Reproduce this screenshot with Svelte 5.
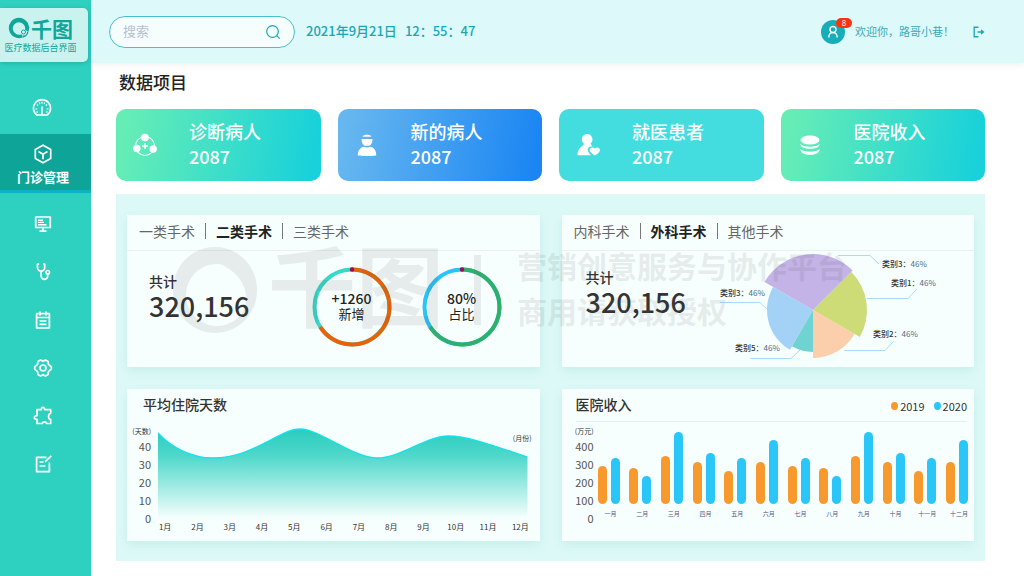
<script>
  const months = Array.from({ length: 12 }, (_, i) => `${i + 1}月`);
  const dayTicks = [40, 30, 20, 10, 0];
  const incomeTicks = [400, 300, 200, 100, 0];

  const stats = [
    { title: '诊断病人', value: '2087', tone: 'mint', icon: 'network' },
    { title: '新的病人', value: '2087', tone: 'blue', icon: 'patient' },
    { title: '就医患者', value: '2087', tone: 'aqua', icon: 'care' },
    { title: '医院收入', value: '2087', tone: 'mint', icon: 'coins' }
  ];

  const income = [
    ['一月', 38, 46], ['二月', 36, 28], ['三月', 48, 72], ['四月', 42, 51],
    ['五月', 33, 46], ['六月', 42, 64], ['七月', 38, 46], ['八月', 36, 28],
    ['九月', 48, 72], ['十月', 42, 51], ['十一月', 33, 46], ['十二月', 42, 64]
  ];

  const rings = [
    { value: '+1260', label: '新增', main: '#ea6208', rest: '#36d8c8' },
    { value: '80%', label: '占比', main: '#2fb06a', rest: '#2bc4f8' }
  ];

  // Angles run clockwise from twelve o'clock.
  const slices = [
    { from: 210, to: 300, r: 46, color: '#a4d1f6' },
    { from: 180, to: 210, r: 42, color: '#6fd3d2' },
    { from: 120, to: 180, r: 48, color: '#fbcfab' },
    { from: 45, to: 120, r: 54, color: '#cddc76' },
    { from: 300, to: 405, r: 56, color: '#c3b3e6' }
  ];

  const callouts = [
    { name: '类别3', x: 5, y: 45, line: '5,51.5 45,51.5 53,59' },
    { name: '类别5', x: 20, y: 100, line: '35,107.5 76,107.5 85,99' },
    { name: '类别3', x: 167, y: 16, line: '123,4.5 155,4.5 164,13' },
    { name: '类别1', x: 176, y: 35, line: '152,47.5 193,47.5 202,38' },
    { name: '类别2', x: 158, y: 86, line: '129,99.5 170,99.5 179,90' }
  ];

  function point(cx, cy, r, angle) {
    const a = (angle * Math.PI) / 180;
    return `${(cx + r * Math.sin(a)).toFixed(2)} ${(cy - r * Math.cos(a)).toFixed(2)}`;
  }

  function wedge({ from, to, r }) {
    return `M98 59 L${point(98, 59, r, from)} A${r} ${r} 0 0 1 ${point(98, 59, r, to)} Z`;
  }

  const curve =
    'M0 7 C14 22 34 32 55 32 C95 32 122 3 142 3 C162 3 196 32 219 32 C243 32 268 10 291 10 C312 10 345 23 370 31';

  let surgery = $state(1);
  let department = $state(1);
  let query = $state('');
</script>

{#snippet tabs(names, active, pick)}
  <div class="tabs">
    {#each names as name, i}
      {#if i > 0}<span class="divider"></span>{/if}
      <button type="button" class:active={i === active} onclick={() => pick(i)}>{name}</button>
    {/each}
  </div>
{/snippet}

<div class="app">
  <aside>
    <div class="brand">
      <div class="brand-name">
        <svg viewBox="0 0 22 22" width="22" height="22" aria-hidden="true">
          <path fill="#10a69a" fill-rule="evenodd" d="M11 .8a10.200 10.200 0 1 0 3.500 19.800l-1-3.400A6.200 6.200 0 1 1 17 13l3.500 1.500A10.200 10.200 0 0 0 11 .8z" />
          <circle cx="15.500" cy="15" r="2" fill="none" stroke="#10a69a" stroke-width="1" />
          <path d="M14.500 18.200c2.500 1 4.800-.8 4.500-3.700l1.500 0c-.5 3.500-3 5.900-6 6.100z" fill="#10a69a" />
        </svg>
        <span>千图</span>
      </div>
      <div class="brand-sub">医疗数据后台界面</div>
    </div>

    <nav>
      <a href="#overview" class="first" aria-label="概览">
        <svg viewBox="0 0 20 20" width="20" height="20">
          <path d="M4.800 17h10.400A8.600 8.600 0 1 0 4.800 17z" />
          <path d="M10 8.500v8" stroke-width="1.600" />
          <path d="M3.500 11h1.800M14.700 11h1.800M5 6.500l1.200 1M15 6.500l-1.200 1M10 3.800v1.700M4.200 14H6M14 14h1.800M7.300 4.600l.6 1.300M12.700 4.600l-.6 1.300" stroke-width="1.200" />
        </svg>
      </a>
      <a href="#clinic" class="current">
        <svg viewBox="0 0 20 20" width="20" height="20">
          <path d="M10 1.200l7.700 4.400v8.800L10 18.800l-7.700-4.400V5.600z" />
          <path d="M5.500 7.500L10 10.200l4.500-2.700M10 10.200v5" />
        </svg>
        <span>门诊管理</span>
      </a>
      <a href="#monitor" aria-label="监控">
        <svg viewBox="0 0 20 20" width="20" height="20">
          <path d="M2.700 3h14.600v10.500H2.700zM10 13.500V17M6.500 17.200h7" />
          <path d="M5 6.200h5M5 8.400h6M5 10.700h8.500" stroke-width="1.400" />
        </svg>
      </a>
      <a href="#diagnosis" aria-label="诊断">
        <svg viewBox="0 0 20 20" width="20" height="20">
          <path d="M6.200 2H4.500v3.500a3.600 3.600 0 0 0 7.200 0V2H10M8.100 9.300v4.700a3.300 3.300 0 0 0 6.600 0V12" />
          <circle cx="14.800" cy="10.200" r="1.700" />
        </svg>
      </a>
      <a href="#schedule" aria-label="排班">
        <svg viewBox="0 0 20 20" width="20" height="20">
          <path d="M3.600 3.600h12.800v14.200H3.600zM3.600 7.500h12.800M7 1.500v4M13 1.500v4M6.500 11h7M6.500 14.300h7" />
        </svg>
      </a>
      <a href="#settings" aria-label="设置">
        <svg viewBox="0 0 20 20" width="20" height="20">
          <path d="M7.600 2l2.400 1.300L12.400 2l2.700 1.500.3 2.900 2.900 2.500v2.200l-2.900 2.500-.3 2.900-2.700 1.500-2.400-1.300L7.600 18l-2.700-1.500-.3-2.900-2.900-2.500V8.900l2.900-2.500.3-2.900z" />
          <circle cx="10" cy="10" r="3" />
        </svg>
      </a>
      <a href="#plugins" aria-label="扩展">
        <svg viewBox="0 0 20 20" width="20" height="20">
          <path d="M4 3.700h4.300c-.3-3 3.700-3 3.400 0h6v3.600c-2.900.6-2.900 5.700 0 6.300v3.900h-4.200c-.6-2.300-3.600-2.300-4.200 0H4v-4.200c-3.500.6-3.500-4.100 0-3.600z" />
        </svg>
      </a>
      <a href="#records" aria-label="记录">
        <svg viewBox="0 0 20 20" width="20" height="20">
          <path d="M13.500 3.300H3.600v14.400h12.800V8.500M18.300 1.800L12 7.800M6.500 8h4M6.500 12h6" />
        </svg>
      </a>
    </nav>
  </aside>

  <div class="page">
    <header>
      <label class="search">
        <input type="text" placeholder="搜索" aria-label="搜索" bind:value={query} />
        <svg viewBox="0 0 16 16" width="16" height="16" aria-hidden="true">
          <circle cx="7.500" cy="7.500" r="5.800" />
          <path d="M11.700 11.700l3 3" />
        </svg>
      </label>
      <div class="clock"><span>2021年9月21日</span><span>12：55：47</span></div>
      <div class="user">
        <span class="avatar">
          <svg viewBox="0 0 24 24" width="24" height="24" aria-hidden="true">
            <circle cx="12" cy="9.500" r="3" />
            <path d="M7.800 17.500c0-6.500 8.400-6.500 8.400 0" />
          </svg>
          <span class="badge">8</span>
        </span>
        <span class="hello">欢迎你，路哥小巷！</span>
        <button type="button" class="logout" aria-label="退出">
          <svg viewBox="0 0 12 12" width="12" height="12">
            <path d="M5.500 1.200H1.200v9.600h4.300M4.500 6H9" />
            <path d="M8 3.300L11.600 6 8 8.700z" fill="#1fa9b5" stroke="none" />
          </svg>
        </button>
      </div>
    </header>

    <main>
      <h1>数据项目</h1>

      <section class="stats">
        {#each stats as s}
          <article class="stat {s.tone}">
            <svg viewBox="0 0 26 26" width="26" height="26" aria-hidden="true">
              {#if s.icon === 'network'}
                <circle cx="13" cy="14" r="9.500" fill="none" stroke="#fff" stroke-width="1.100" />
                <circle cx="13" cy="5.500" r="3.800" />
                <circle cx="4.800" cy="16.500" r="3.700" />
                <circle cx="21.200" cy="17" r="3.700" />
                <path d="M12.300 11h1.500v2.300H16v1.500h-2.200V17h-1.500v-2.200H10v-1.500h2.300z" />
              {:else if s.icon === 'patient'}
                <path d="M8.500 4.500C9.500 2 16.500 2 17.500 4.500l-2 .3h-5zM7.500 7h11c0 3.500-1.500 6-3.300 6.800h-4.400C9 13 7.500 10.500 7.500 7zM3.800 23.500C3.500 18 7 15 10 14.700c2 .9 4 .9 6 0 3.500.3 6.500 3.300 6.200 8.800-2 .6-16.400.6-18.400 0z" />
              {:else if s.icon === 'care'}
                <path d="M12 2a5.300 5.300 0 0 1 3.600 9.300l1 2.300 1 1c-3-.8-5.500 1-4.600 4.300.4 1.500 1.500 2.800 3 4.300H2.500C2.500 18 5 15 8.600 13.200v-2A5.300 5.300 0 0 1 12 2z" />
                <path d="M19.800 16.500c1.700-2 5.200-1.200 5.200 1.400 0 2.300-2.600 3.600-5.200 5.600-2.600-2-5.200-3.300-5.200-5.600 0-2.600 3.500-3.400 5.200-1.400z" />
              {:else}
                <ellipse cx="13" cy="8" rx="9.500" ry="4.500" />
                <path d="M3.500 12c3 3.700 16 3.700 19 0 1.300 6.300-20.300 6.300-19 0zM3.500 17c3 3.700 16 3.700 19 0 1.300 7.800-20.300 7.800-19 0z" />
              {/if}
            </svg>
            <div>
              <h2>{s.title}</h2>
              <strong>{s.value}</strong>
            </div>
          </article>
        {/each}
      </section>

      <section class="board">
        <article class="card">
          {@render tabs(['一类手术', '二类手术', '三类手术'], surgery, (i) => (surgery = i))}
          <div class="summary">
            <div class="total"><span>共计</span><strong>320,156</strong></div>
            <div class="rings">
              {#each rings as ring}
                <div class="ring">
                  <svg viewBox="0 0 80 80" width="80" height="80" aria-hidden="true">
                    <circle cx="40" cy="40" r="37.500" stroke={ring.rest} />
                    <path d="M{point(40, 40, 37.5, 0)} A37.500 37.500 0 1 1 {point(40, 40, 37.5, 238)}" stroke={ring.main} />
                    <circle class="dot" cx="40" cy="2.500" r="2.200" />
                  </svg>
                  <div><b>{ring.value}</b><span>{ring.label}</span></div>
                </div>
              {/each}
            </div>
          </div>
        </article>

        <article class="card">
          {@render tabs(['内科手术', '外科手术', '其他手术'], department, (i) => (department = i))}
          <div class="summary split">
            <div class="total"><span>共计</span><strong>320,156</strong></div>
            <svg class="pie" viewBox="0 0 230 114" width="230" height="114" role="img" aria-label="手术类别">
              {#each callouts as c}
                <polyline points={c.line} />
                <text x={c.x} y={c.y}>{c.name}：<tspan>46%</tspan></text>
              {/each}
              {#each slices as s}
                <path d={wedge(s)} fill={s.color} />
              {/each}
            </svg>
          </div>
        </article>

        <article class="card">
          <h3>平均住院天数</h3>
          <div class="chart days">
            <div class="axis">
              <span class="unit">(天数)</span>
              {#each dayTicks as t}<span>{t}</span>{/each}
            </div>
            <div class="plot">
              <svg viewBox="0 0 370 93" preserveAspectRatio="none" aria-hidden="true">
                <defs>
                  <linearGradient id="fade" x1="0" y1="0" x2="0" y2="1">
                    <stop offset="0" stop-color="#2accbd" />
                    <stop offset="0.300" stop-color="#4fd8cb" />
                    <stop offset="1" stop-color="#f7fffe" />
                  </linearGradient>
                </defs>
                <path d="{curve} V93 H0 Z" fill="url(#fade)" />
                <path d={curve} fill="none" stroke="#12e3ec" stroke-width="1.300" />
              </svg>
              <span class="unit month-unit">(月份)</span>
              <div class="months">
                {#each months as m}<span>{m}</span>{/each}
              </div>
            </div>
          </div>
        </article>

        <article class="card">
          <div class="income-head">
            <h3>医院收入</h3>
            <div class="legend">
              <span><i class="y2019"></i>2019</span>
              <span><i class="y2020"></i>2020</span>
            </div>
          </div>
          <div class="chart income">
            <div class="axis">
              <span class="unit">(万元)</span>
              {#each incomeTicks as t}<span>{t}</span>{/each}
            </div>
            <div class="groups">
              {#each income as [name, a, b]}
                <div class="group">
                  <div class="bars">
                    <i class="y2019" style="height: {a}px"></i>
                    <i class="y2020" style="height: {b}px"></i>
                  </div>
                  <span>{name}</span>
                </div>
              {/each}
            </div>
          </div>
        </article>

        <div class="watermark" aria-hidden="true">
          <svg viewBox="0 0 86 88" width="86" height="88">
            <path fill-rule="evenodd" d="M43 1a42 43 0 1 0 .1 0zM45 18a31 31 0 1 1-.1 0z" />
            <path d="M48 18c34 4 44 42 14 62 18-18 18-48-14-62z" />
          </svg>
          <span class="mark">千图</span>
          <span class="bar"></span>
          <div class="lines"><span>营销创意服务与协作平台</span><span>商用请获取授权</span></div>
        </div>
      </section>
    </main>
  </div>
</div>

<style>
  :global(body) {
    background: #fff;
  }

  .app {
    display: flex;
    min-height: 100vh;
    font-family: 'Noto Sans CJK SC', 'Noto Sans', sans-serif;
    color: #333;
  }

  .app :global(*) {
    box-sizing: border-box;
  }

  h1, h2, h3 {
    margin: 0;
    font-weight: 500;
  }

  button {
    padding: 0;
    border: 0;
    background: none;
    font: inherit;
    color: inherit;
    cursor: pointer;
  }

  aside {
    flex: 0 0 91px;
    background: #2ed1c0;
  }

  .brand {
    display: flex;
    flex-direction: column;
    align-items: center;
    width: 88px;
    height: 54px;
    margin-top: 8px;
    padding: 7px 7px 0 0;
    border-radius: 0 5px 5px 0;
    background: #caf3f0;
    box-shadow: 0 1px 4px rgba(0, 90, 90, 0.3);
    color: #10a69a;
  }

  .brand-name {
    display: flex;
    align-items: center;
    gap: 1px;
    font-size: 21px;
    font-weight: 700;
    line-height: 26px;
  }

  .brand-sub {
    font-size: 9px;
    line-height: 14px;
    white-space: nowrap;
  }

  nav {
    display: flex;
    flex-direction: column;
    padding-top: 22px;
  }

  nav a {
    display: flex;
    flex-direction: column;
    align-items: center;
    justify-content: center;
    height: 48px;
    padding: 0 5px 1px 0;
    color: #fff;
    font-size: 13px;
    font-weight: 700;
    line-height: 20px;
    text-decoration: none;
  }

  nav a.first {
    margin-bottom: 2px;
    padding-right: 8px;
  }

  nav a.current {
    gap: 3px;
    height: 59px;
    margin-bottom: 7px;
    padding-top: 8px;
    border-bottom: 3px solid #08b4c6;
    background: #0ea498;
  }

  nav svg {
    fill: none;
    stroke: #fff;
    stroke-width: 1.7;
    stroke-linejoin: round;
  }

  .page {
    flex: 1;
    min-width: 0;
  }

  header {
    display: flex;
    align-items: center;
    height: 63px;
    padding: 0 39px 0 18px;
    background: #def9f9;
    box-shadow: 0 2px 6px rgba(0, 0, 0, 0.06);
  }

  .search {
    display: flex;
    align-items: center;
    width: 186px;
    height: 32px;
    padding: 0 13px;
    border: 1px solid #48bfcd;
    border-radius: 16px;
    background: #f6fefd;
  }

  .search input {
    flex: 1;
    min-width: 0;
    padding: 0 0 2px;
    border: 0;
    outline: 0;
    background: none;
    font-family: inherit;
    font-size: 13px;
  }

  .search input::placeholder {
    color: #b4c0d2;
  }

  .search svg {
    fill: none;
    stroke: #1ea9b5;
    stroke-width: 1.2;
  }

  .clock {
    display: flex;
    gap: 8px;
    margin-left: 11px;
    padding-bottom: 2px;
    color: #1ba8b4;
    font-size: 13px;
    font-weight: 500;
    white-space: nowrap;
  }

  .user {
    display: flex;
    align-items: center;
    margin-left: auto;
  }

  .avatar {
    position: relative;
    width: 24px;
    height: 24px;
    border-radius: 50%;
    background: #17aeba;
  }

  .avatar svg {
    display: block;
    fill: none;
    stroke: #fff;
    stroke-width: 1.4;
  }

  .badge {
    position: absolute;
    top: -2px;
    left: 15px;
    width: 16px;
    border-radius: 5px;
    background: #fa3311;
    color: #fff;
    font-size: 8px;
    line-height: 10px;
    text-align: center;
  }

  .hello {
    margin: 0 19px 0 10px;
    padding-bottom: 2px;
    color: #3aabb7;
    font-size: 11px;
    white-space: nowrap;
  }

  .logout svg {
    display: block;
    fill: none;
    stroke: #1fa9b5;
    stroke-width: 1.4;
  }

  main {
    padding: 6px 39px 15px 25px;
  }

  h1 {
    padding-left: 3px;
    margin-bottom: 14px;
    color: #222;
    font-size: 17px;
    line-height: 26px;
  }

  .stats {
    display: grid;
    grid-template-columns: repeat(4, 1fr);
    gap: 17px;
  }

  .stat {
    display: flex;
    align-items: center;
    gap: 31px;
    height: 72px;
    padding-left: 16px;
    border-radius: 10px;
    color: #fff;
  }

  .stat div {
    padding-bottom: 2px;
  }

  .stat svg {
    fill: #fff;
  }

  .mint {
    background: linear-gradient(100deg, #66edb6 5%, #18d1da 95%);
  }

  .blue {
    background: linear-gradient(100deg, #66b7ef 5%, #1b86f3 95%);
  }

  .aqua {
    background: #44dddf;
  }

  .stat h2,
  .stat strong {
    display: block;
    font-size: 18px;
    font-weight: 500;
    line-height: 25px;
  }

  .board {
    position: relative;
    display: grid;
    grid-template-columns: repeat(2, minmax(0, 1fr));
    gap: 22px;
    margin-top: 13px;
    padding: 21px 11px 20px;
    background: #dcf9f7;
  }

  .card {
    min-height: 152px;
    background: #f7fffe;
    box-shadow: 0 4px 10px rgba(0, 130, 120, 0.09);
  }

  .tabs {
    display: flex;
    align-items: center;
    gap: 10px;
    height: 36px;
    padding: 0 0 3px 12px;
    border-bottom: 1px solid #ecefef;
    color: #666;
    font-size: 14px;
  }

  .tabs .active {
    color: #222;
    font-weight: 700;
  }

  .divider {
    width: 1px;
    height: 16px;
    background: #777;
  }

  .summary {
    display: flex;
    justify-content: space-between;
    padding: 16px 38px 0 22px;
  }

  .split {
    padding: 0 29px 0 24px;
  }

  .total {
    display: flex;
    flex-direction: column;
    padding-top: 3px;
    font-size: 14px;
    font-weight: 500;
    line-height: 22px;
  }

  .split .total {
    padding-top: 15px;
  }

  .total strong {
    font-size: 27px;
    font-weight: 500;
    line-height: 28px;
  }

  .rings {
    display: flex;
    gap: 30px;
  }

  .ring {
    display: grid;
    place-items: center;
  }

  .ring > * {
    grid-area: 1 / 1;
  }

  .ring svg {
    fill: none;
    stroke-width: 4;
  }

  .ring .dot {
    fill: #96104e;
  }

  .ring div {
    display: flex;
    flex-direction: column;
    align-items: center;
    padding-bottom: 2px;
    color: #222;
    font-size: 13px;
    line-height: 16px;
  }

  .ring b {
    font-size: 14px;
    font-weight: 500;
  }

  .pie polyline {
    fill: none;
    stroke: #a9dbfb;
  }

  .pie text {
    fill: #333;
    font-size: 8px;
    font-weight: 500;
  }

  .pie tspan {
    fill: #4a6d86;
    font-weight: 400;
  }

  h3 {
    padding: 5px 0 12px 16px;
    font-size: 14px;
    line-height: 20px;
  }

  .chart {
    display: flex;
  }

  .days {
    gap: 7px;
    padding: 0 12px 0 4px;
  }

  .income {
    gap: 4px;
    padding: 0 6px 0 12px;
  }

  .axis {
    display: flex;
    flex-direction: column;
    align-items: flex-end;
    flex: 0 0 20px;
    margin-top: -1px;
    color: #555;
    font-size: 11px;
    line-height: 18px;
  }

  .unit {
    color: #333;
    font-size: 7px;
    line-height: 12px;
    white-space: nowrap;
  }

  .plot {
    position: relative;
    flex: 1;
    min-width: 0;
  }

  .plot svg {
    display: block;
    width: 100%;
    height: 93px;
  }

  .month-unit {
    position: absolute;
    top: 6px;
    right: -4px;
  }

  .months {
    display: grid;
    grid-template-columns: repeat(12, 1fr);
    margin: 2px -9px 0;
    font-size: 8px;
    line-height: 12px;
    text-align: center;
  }

  .income-head {
    display: flex;
    align-items: center;
    justify-content: space-between;
    height: 33px;
    margin: 0 7px 4px 14px;
    border-bottom: 1px solid #e6eeee;
  }

  .income-head h3 {
    padding: 0 0 2px;
  }

  .legend {
    display: flex;
    gap: 9px;
    padding-top: 2px;
    font-size: 11px;
    line-height: 16px;
  }

  .legend span {
    display: flex;
    align-items: center;
    gap: 2px;
  }

  .legend i {
    width: 7px;
    height: 8px;
    border-radius: 50%;
  }

  .y2019 {
    background: #f8992e;
  }

  .y2020 {
    background: #2bc6f8;
  }

  .groups {
    display: flex;
    flex: 1;
    justify-content: space-between;
  }

  .group {
    display: flex;
    flex-direction: column;
    align-items: center;
    gap: 4px;
    width: 22px;
    color: #55557f;
    font-size: 6px;
    line-height: 12px;
    white-space: nowrap;
  }

  .group span {
    padding-left: 4px;
  }

  .bars {
    display: flex;
    align-items: flex-end;
    gap: 4px;
    height: 78px;
  }

  .bars i {
    width: 9px;
    border-radius: 5px;
  }

  .watermark {
    position: absolute;
    top: 49px;
    left: 56px;
    display: flex;
    align-items: center;
    color: #505050;
    opacity: 0.1;
    pointer-events: none;
    white-space: nowrap;
  }

  .watermark svg {
    fill: #505050;
  }

  .mark {
    align-self: flex-start;
    margin: 0 30px 0 10px;
    font-size: 88px;
    font-weight: 700;
    line-height: 78px;
  }

  .bar {
    width: 7px;
    height: 70px;
    background: #505050;
  }

  .lines {
    display: flex;
    flex-direction: column;
    margin-left: 36px;
    padding-bottom: 3px;
    font-size: 30px;
    font-weight: 700;
    line-height: 45px;
  }
</style>
